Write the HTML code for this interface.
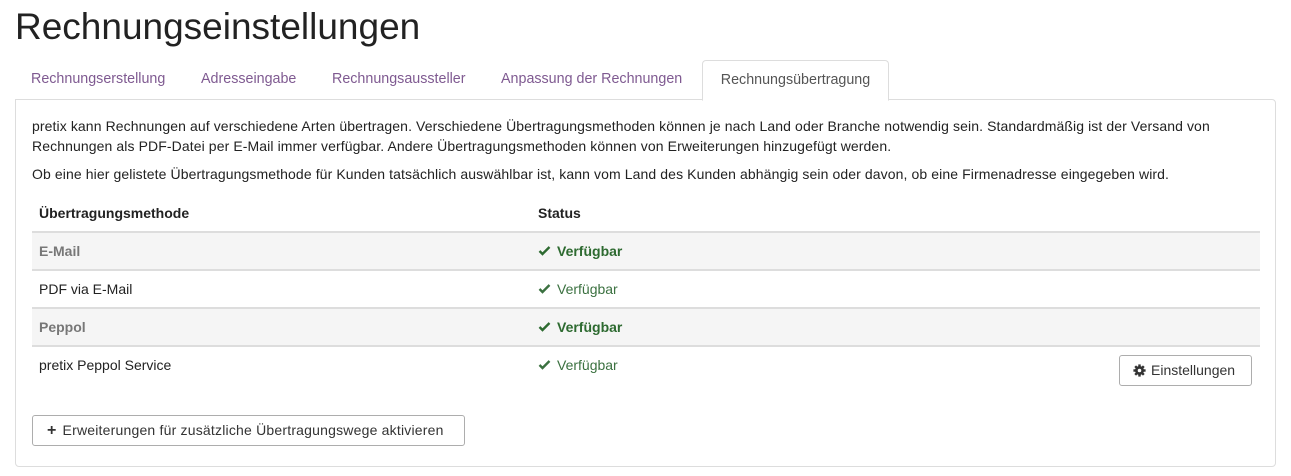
<!DOCTYPE html>
<html><head><meta charset="utf-8"><style>
body{margin:0;background:#fff;font-family:"Liberation Sans",sans-serif;color:#222;width:1291px;height:476px;overflow:hidden;position:relative}
h1{position:absolute;left:15px;top:6px;margin:0;font-size:37px;font-weight:normal;color:#222;letter-spacing:0px}
.tab{position:absolute;top:60px;height:39px;line-height:39px;font-size:14.3px;color:#7f5a91}
.act{border:1px solid #ddd;border-bottom:1px solid #fff;border-radius:4px 4px 0 0;background:#fff;color:#555;text-align:center;z-index:2;height:39px}
.panel{position:absolute;left:15px;top:99px;width:1259px;height:366px;border:1px solid #ddd;border-radius:0 4px 4px 4px}
p{position:absolute;left:32px;margin:0;font-size:14px;line-height:20px;width:1222px;letter-spacing:0.1px}
.row{position:absolute;left:32px;width:1228px;height:36px;line-height:36px;font-size:14px;border-top:2px solid #ddd}
.row.g{background:#f5f5f5;color:#777;font-weight:bold}
.row span{position:absolute;left:7px}
.row .s{left:506px;color:#3b7140}
.row.g .s{color:#2d6a30;font-weight:bold}
.chk{display:inline-block;width:13px;margin-right:6px}
.btn{position:absolute;border:1px solid #adadad;border-radius:3px;background:#fff;font-size:14px;color:#333;line-height:29px;box-sizing:border-box;height:31px}
</style></head><body>
<h1>Rechnungseinstellungen</h1>
<div class="tab" style="left:31px">Rechnungserstellung</div>
<div class="tab" style="left:201px">Adresseingabe</div>
<div class="tab" style="left:332px">Rechnungsaussteller</div>
<div class="tab" style="left:501px">Anpassung der Rechnungen</div>
<div class="tab act" style="left:702px;width:185px">Rechnungsübertragung</div>
<div class="panel"></div>
<p style="top:116px">pretix kann Rechnungen auf verschiedene Arten übertragen. Verschiedene Übertragungsmethoden können je nach Land oder Branche notwendig sein. Standardmäßig ist der Versand von Rechnungen als PDF-Datei per E-Mail immer verfügbar. Andere Übertragungsmethoden können von Erweiterungen hinzugefügt werden.</p>
<p style="top:164px">Ob eine hier gelistete Übertragungsmethode für Kunden tatsächlich auswählbar ist, kann vom Land des Kunden abhängig sein oder davon, ob eine Firmenadresse eingegeben wird.</p>
<div class="row" style="top:195px;border-top:none;font-weight:bold;height:36px"><span>Übertragungsmethode</span><span class="s" style="color:#222">Status</span></div>
<div class="row g" style="top:231px"><span>E-Mail</span><span class="s"><svg class="chk" viewBox="0 0 12 10" width="12" height="10"><path d="M1 5l3 3 7-7" stroke="currentColor" stroke-width="2.4" fill="none"/></svg>Verfügbar</span></div>
<div class="row" style="top:269px"><span>PDF via E-Mail</span><span class="s"><svg class="chk" viewBox="0 0 12 10" width="12" height="10"><path d="M1 5l3 3 7-7" stroke="currentColor" stroke-width="2.4" fill="none"/></svg>Verfügbar</span></div>
<div class="row g" style="top:307px"><span>Peppol</span><span class="s"><svg class="chk" viewBox="0 0 12 10" width="12" height="10"><path d="M1 5l3 3 7-7" stroke="currentColor" stroke-width="2.4" fill="none"/></svg>Verfügbar</span></div>
<div class="row" style="top:345px"><span>pretix Peppol Service</span><span class="s"><svg class="chk" viewBox="0 0 12 10" width="12" height="10"><path d="M1 5l3 3 7-7" stroke="currentColor" stroke-width="2.4" fill="none"/></svg>Verfügbar</span></div>
<div class="btn" style="left:1119px;top:355px;width:133px;padding-left:13px"><svg width="13" height="13" viewBox="0 0 16 16" style="vertical-align:-2px;margin-right:5px"><g fill="#333"><circle cx="8" cy="8" r="5.5"/><rect x="6.5" y="0.5" width="3" height="15"/><rect x="0.5" y="6.5" width="15" height="3"/><rect x="6.5" y="0.5" width="3" height="15" transform="rotate(45 8 8)"/><rect x="6.5" y="0.5" width="3" height="15" transform="rotate(-45 8 8)"/></g><circle cx="8" cy="8" r="2.2" fill="#fff"/></svg>Einstellungen</div>
<div class="btn" style="left:32px;top:415px;width:433px;padding-left:14px;letter-spacing:0.2px"><span style="font-weight:bold;font-size:16px;margin-right:6px">+</span>Erweiterungen für zusätzliche Übertragungswege aktivieren</div>
</body></html>
